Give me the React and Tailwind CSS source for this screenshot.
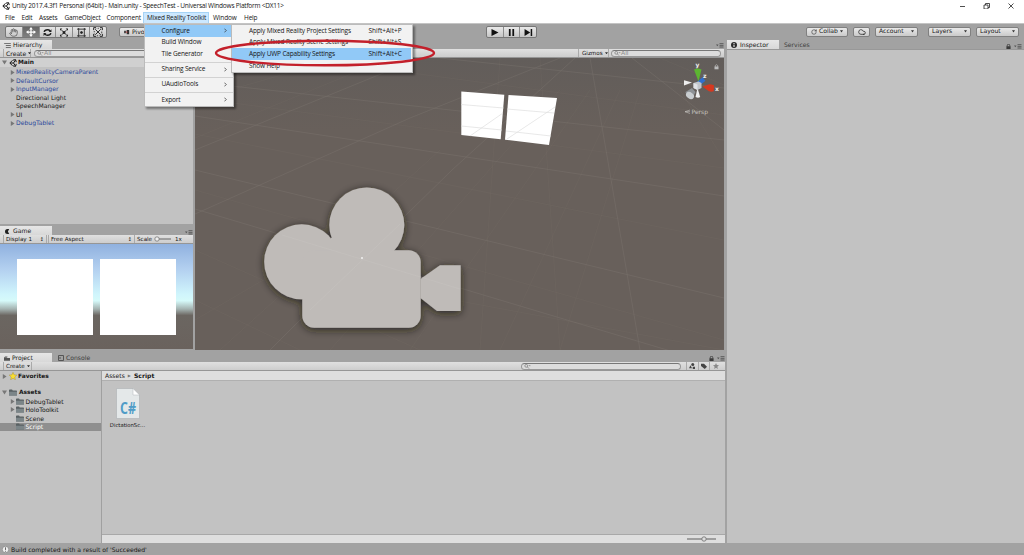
import React from 'react'
import { RotateCw, Cloud, Hand } from 'lucide-react'
import clsx from 'clsx'

const MENUS = [
  { label: 'File', width: 'w-[16.500px]' },
  { label: 'Edit', width: 'w-[17.500px]' },
  { label: 'Assets', width: 'w-[25.500px]' },
  { label: 'GameObject', width: 'w-[42px]' },
  { label: 'Component', width: 'w-[40.500px]' },
  { label: 'Mixed Reality Toolkit', width: 'w-[64px] mr-[2px]', open: true },
  { label: 'Window', width: 'w-[31px]' },
  { label: 'Help', width: 'w-[20px]' },
]

const TOOLKIT_MENU = [
  { label: 'Configure', sub: true, active: true },
  { label: 'Build Window' },
  { label: 'Tile Generator' },
  { label: 'Sharing Service', sub: true, line: true },
  { label: 'UAudioTools', sub: true, line: true },
  { label: 'Export', sub: true, line: true },
]

const CONFIGURE_MENU = [
  { label: 'Apply Mixed Reality Project Settings', keys: 'Shift+Alt+P' },
  { label: 'Apply Mixed Reality Scene Settings', keys: 'Shift+Alt+S' },
  { label: 'Apply UWP Capability Settings', keys: 'Shift+Alt+C', active: true },
  { label: 'Show Help' },
]

const OBJECTS = [
  { label: 'MixedRealityCameraParent', prefab: true, arrow: true },
  { label: 'DefaultCursor', prefab: true, arrow: true },
  { label: 'InputManager', prefab: true, arrow: true },
  { label: 'Directional Light' },
  { label: 'SpeechManager' },
  { label: 'UI', arrow: true },
  { label: 'DebugTablet', prefab: true, arrow: true },
]

const FOLDERS = [
  { label: 'DebugTablet', arrow: true },
  { label: 'HoloToolkit', arrow: true },
  { label: 'Scene' },
  { label: 'Script', selected: true },
]

const BAR = 'flex items-center shrink-0 h-[9px] bg-linear-to-b from-[#e0e0e0] to-[#cdcdcd] border-b border-[#969696]'

function UnityLogo({ className }) {
  return (
    <svg viewBox="0 0 16 16" className={clsx('shrink-0', className)} fill="none" stroke="#1c1c1c" strokeWidth="2">
      <path d="M7 2.5 1.8 8 7 13.5M1.8 8H9M9 8l4-6M9 8l4 6M8 2.2l5.2-1 1.3 5M8 13.8l5.2 1 1.3-5" />
    </svg>
  )
}

function Arrow({ open, hidden }) {
  return (
    <svg viewBox="0 0 6 6" className={clsx('w-[5px] h-[5px] shrink-0', hidden && 'invisible')} fill="#777">
      <path d={open ? 'M0 .5h6L3 5.5z' : 'M1 0v6l4.500-3z'} />
    </svg>
  )
}

function Lock({ className }) {
  return (
    <svg viewBox="0 0 6 6" className={clsx('w-[5px] h-[5px] shrink-0', className)}>
      <path d="M1.500 3V1.800a1.500 1.500 0 0 1 3 0V3" fill="none" stroke="currentColor" />
      <rect x=".5" y="2.700" width="5" height="3.300" fill="currentColor" />
    </svg>
  )
}

function PanelMenu() {
  return (
    <svg viewBox="0 0 8 5" className="w-[8px] h-[5px] shrink-0" fill="#555">
      <path d="M0 1.500h2.600L1.300 3.300zM3.500.3h4v.9h-4zM3.500 1.900h4v.9h-4zM3.500 3.500h4v.9h-4z" />
    </svg>
  )
}

function Folder() {
  return (
    <svg viewBox="0 0 16 13" className="w-[8px] h-[7px] shrink-0">
      <path d="M0 2Q0 .5 1.500.5H6l1.500 2h7Q16 2.500 16 4v7.500q0 1-1 1H1q-1 0-1-1z" fill="#596163" />
      <path d="M0 5h16v6.500q0 1-1 1H1q-1 0-1-1z" fill="#7b8588" />
    </svg>
  )
}

function Search({ text, className }) {
  return (
    <div className={clsx('flex items-center h-[7px] rounded-full border border-[#989898] border-t-[#777] bg-[#dcdcdc] pl-[2px] text-[#8b8b8b]', className)}>
      <svg viewBox="0 0 8 6" className="w-[7px] h-[5px] shrink-0" fill="none" stroke="#858585">
        <circle cx="2.500" cy="2.200" r="1.700" />
        <path d="m3.800 3.500 2 2M5.500 2h2" />
      </svg>
      {text}
    </div>
  )
}

function Tab({ children, idle, className }) {
  return (
    <div className={clsx('flex items-center gap-[2px] h-[9px] pt-[1px]', idle ? 'text-[#3d3d3d]' : 'bg-linear-to-b from-[#e6e6e6] to-[#d8d8d8]', className)}>
      {children}
    </div>
  )
}

function Button({ children, className }) {
  return (
    <div className={clsx('flex items-center justify-center h-[10px] rounded-[2px] border border-[#808080] bg-linear-to-b from-[#e9e9e9] to-[#cacaca]', className)}>
      {children}
    </div>
  )
}

function Caret() {
  return <svg viewBox="0 0 4 3" className="w-[3px] h-[2.500px] shrink-0"><path d="M0 0h4L2 3z" fill="#333" /></svg>
}

function Label({ children }) {
  return <span className="pt-[1.500px]">{children}</span>
}

function TransformTools() {
  return (
    <div className="flex h-[12px] w-[102px] ml-[5px] rounded-[2px] border border-[#777] bg-linear-to-b from-[#e6e6e6] to-[#c6c6c6] divide-x divide-[#8c8c8c] *:flex *:flex-1 *:items-center *:justify-center">
      <div><Hand className="w-[9px] h-[9px] text-[#555]" /></div>
      <div className="bg-linear-to-b from-[#666] to-[#808080]">
        <svg viewBox="0 0 16 16" className="w-[10px] h-[10px]" fill="#fff">
          <path d="M7 4H5l3-4 3 4H9v3h3V5l4 3-4 3V9H9v3h2l-3 4-3-4h2V9H4v2L0 8l4-3v2h3z" />
        </svg>
      </div>
      <div>
        <svg viewBox="0 0 16 16" className="w-[9px] h-[9px]" fill="none" stroke="#1e1e1e" strokeWidth="2.500">
          <path d="M2 7q1-4 6-4 3 0 4.500 2M14 9q-1 4-6 4-3 0-4.500-2" />
          <path d="M15 2v5h-5zM1 14V9h5z" fill="#1e1e1e" stroke="none" />
        </svg>
      </div>
      <div>
        <svg viewBox="0 0 16 16" className="w-[10px] h-[9px]" fill="#1e1e1e" stroke="#1e1e1e" strokeWidth="1.500">
          <rect x="6.500" y="6.500" width="3" height="3" />
          <path d="m3 3 10 10M13 3 3 13" />
          <path d="M1 1h4L1 5zM15 1v4l-4-4zM1 15v-4l4 4zM15 15h-4l4-4z" stroke="none" />
        </svg>
      </div>
      <div>
        <svg viewBox="0 0 16 16" className="w-[9px] h-[9px]" fill="none" stroke="#222" strokeWidth="1.500">
          <path d="M3 0v16M13 0v16M0 2h16M0 14h16" />
          <circle cx="8" cy="8" r="1.800" fill="#222" />
        </svg>
      </div>
      <div>
        <svg viewBox="0 0 16 16" className="w-[10px] h-[10px]" fill="none" stroke="#222" strokeWidth="1.500">
          <path d="m4 4 8 8M12 4l-8 8M1 5V1h4M11 1h4v4M15 11v4h-4M5 15H1v-4" />
          <circle cx="8" cy="8" r="6" strokeDasharray="2 2.500" />
        </svg>
      </div>
    </div>
  )
}

function Toolbar() {
  return (
    <div className="flex shrink-0 h-[17px] pt-[2px] border-t border-[#c4c4c4] bg-[#a2a2a2]">
      <div className="w-[486px] flex">
        <TransformTools />
        <Button className="mt-px ml-[12px] w-[40px] !justify-start pl-[4px]">
          <svg viewBox="0 0 8 6" className="w-[7px] h-[5px] mr-[1px]"><path d="M0 1h2v3H0zM3 0h3v5H3z" fill="#333" /><path d="M2 2h2v1H2z" fill="#c33" /></svg>
          Pivot
        </Button>
      </div>
      <div className="flex w-[51px] h-[12px] rounded-[2px] border border-[#777] bg-linear-to-b from-[#e9e9e9] to-[#c6c6c6] divide-x divide-[#8c8c8c] *:flex *:flex-1 *:items-center *:justify-center">
        <div><svg viewBox="0 0 8 8" className="w-[8px] h-[7px]"><path d="M0 0 8 4 0 8z" fill="#111" /></svg></div>
        <div><svg viewBox="0 0 8 8" className="w-[7px] h-[7px]"><path d="M1 0h2v8H1zM5 0h2v8H5z" fill="#111" /></svg></div>
        <div><svg viewBox="0 0 9 8" className="w-[9px] h-[7px]"><path d="M0 0 6.500 4 0 8zM7 0h1.700v8H7z" fill="#111" /></svg></div>
      </div>
      <div className="flex ml-auto pr-[5px] pt-[.5px]">
        <Button className="w-[42px] gap-[2px]">
          <RotateCw className="w-[6px] h-[6px]" />Collab<Caret />
        </Button>
        <Button className="w-[17px] ml-[5px]"><Cloud className="w-[8px] h-[8px]" /></Button>
        <Button className="w-[43px] ml-[5px] !justify-between px-[3px]">Account<Caret /></Button>
        <Button className="w-[43px] ml-[10px] !justify-between px-[3px]">Layers<Caret /></Button>
        <Button className="w-[43px] ml-[5px] !justify-between px-[3px]">Layout<Caret /></Button>
      </div>
    </div>
  )
}

function Hierarchy() {
  return (
    <div className="flex flex-col h-[184px] shrink-0">
      <Tab className="w-[52px] pl-[4px]">
        <svg viewBox="0 0 8 6" className="w-[7px] h-[5px]" stroke="#555"><path d="M0 .5h8M2 3h6M2 5.500h6" /></svg>
        Hierarchy
      </Tab>
      <div className={BAR}>
        <div className="flex items-center gap-[2px] w-[28px] h-full ml-[3px] pl-[2px] border-x border-[#aaa]"><Label>Create</Label><Caret /></div>
        <Search text="All" className="ml-[3px] w-[148px]" />
      </div>
      <div className="flex-1 bg-[#c2c2c2]">
        <div className="flex items-center h-[9px] pl-[2px] mb-px bg-[#d0d0d0] font-bold text-[5.900px]">
          <Arrow open />
          <UnityLogo className="w-[8px] h-[8px] ml-[2px] mr-[1px]" />
          <Label>Main</Label>
        </div>
        {OBJECTS.map(o => (
          <div key={o.label} className={clsx('flex items-center h-[8.500px] pl-[10px]', o.prefab && 'text-[#29479b]')}>
            <Arrow hidden={!o.arrow} />
            <span className="pl-[1px]">{o.label}</span>
          </div>
        ))}
      </div>
    </div>
  )
}

function Game() {
  return (
    <div className="flex flex-col flex-1 pt-[2px]">
      <div className="flex justify-between items-end">
        <Tab className="w-[52px] pl-[5px]">
          <svg viewBox="0 0 6 6" className="w-[5px] h-[5px]"><path d="M3 0a3 3 0 0 0 0 6h2L3.500 3 5 0z" fill="#222" /></svg>
          <span className="pl-[1px]">Game</span>
        </Tab>
        <PanelMenu />
      </div>
      <div className={clsx(BAR, 'text-[5.600px]')}>
        <div className="flex justify-between items-center w-[44px] h-full ml-[3px] px-[2px] border-x border-[#aaa]"><Label>Display 1</Label><span className="text-[5px]">↕</span></div>
        <div className="flex justify-between items-center w-[87px] h-full ml-[1px] px-[2px] border-x border-[#aaa]"><Label>Free Aspect</Label><span className="text-[5px]">↕</span></div>
        <span className="ml-[2px] pt-[1.500px]">Scale</span>
        <svg viewBox="0 0 18 6" className="w-[18px] h-[6px] ml-[2px]"><path d="M2 3h15" stroke="#666" /><circle cx="3" cy="3" r="2.200" fill="#eee" stroke="#777" strokeWidth=".8" /></svg>
        <span className="ml-[3px] pt-[1.500px]">1x</span>
      </div>
      <div className="flex gap-[7px] pl-[17px] pt-[15px] flex-1 mb-[1px] bg-[linear-gradient(#90b1df_0,#b3d0f0_24%,#d0f5fc_48%,#d6fafa_54%,#a4b2b0_62%,#6b6661_68%,#6a625d_100%)]">
        <div className="w-[76px] h-[76px] bg-white" />
        <div className="w-[76px] h-[76px] bg-white" />
      </div>
    </div>
  )
}

function Gizmo() {
  return (
    <g>
      <path d="m698 84 6-5" stroke="#2f6fd0" strokeWidth="4.500" />
      <path d="m694 69.500 3.500-1h1l3 1-3 12z" fill="#5cb531" />
      <path d="m702.500 86.500 7-2.200q2 .2 4.500 1l-.3 6q-2.700 1-5.200-.3z" fill="#d6381f" />
      <path d="m684 80.300 8 2.200-8 3z" fill="#eee" />
      <path d="m697.500 88 2.700 9q-2 1.500-4.700 0z" fill="#efefef" />
      <path d="m692 88-6.500 4 1.500 5 5 2 3.500-7z" fill="#8e9296" />
      <ellipse cx="690" cy="95.500" rx="4.300" ry="3.200" transform="rotate(35 690 95.500)" fill="#c9cdd0" />
      <path d="m693.500 83 5-1.500 3 1.500v5l-4 2-4-2z" fill="#c2c6cc" />
      <path d="m693.500 83 4 1.500v5.500l-4-2z" fill="#e0e2e6" />
      <g fill="#eee" fontSize="6" fontWeight="bold">
        <text x="695.500" y="67">y</text>
        <text x="703" y="78">z</text>
        <text x="715" y="91">x</text>
      </g>
      <path d="m690 110-5 1.700 5 1.800M685 111.700h5" stroke="#c5c2bf" strokeWidth=".6" fill="none" />
      <text x="691.500" y="114" fontSize="6" fill="#c5c2bf">Persp</text>
    </g>
  )
}

function Scene() {
  return (
    <div className="flex flex-col w-[529px] shrink-0">
      <div className="h-[9px] flex justify-end items-end pb-[1px]"><PanelMenu /></div>
      <div className={clsx(BAR, 'justify-end')}>
        <div className="flex items-center gap-[2px] w-[31px] h-full pl-[3px] border-x border-[#aaa] text-[5.600px]"><Label>Gizmos</Label><Caret /></div>
        <Search text="All" className="ml-[2px] mr-[3px] w-[110px]" />
      </div>
      <svg viewBox="195 58 529 292" className="w-[529px] h-[292px] block">
        <defs>
          <linearGradient id="ground" x1="0" y1="0" x2="0" y2="1">
            <stop offset="0" stopColor="#625d5a" />
            <stop offset=".25" stopColor="#68605b" />
            <stop offset="1" stopColor="#68605b" />
          </linearGradient>
          <filter id="glow" x="-20%" y="-20%" width="140%" height="140%">
            <feDropShadow dx="0" dy="2" stdDeviation="4" floodColor="#1e1a17" floodOpacity=".75" />
          </filter>
        </defs>
        <rect x="195" y="58" width="529" height="292" fill="url(#ground)" />
        <g stroke="#8b847e" strokeWidth=".6" opacity=".4" fill="none">
          <path d="M195 214 410 118 560 58M270 350 360 260 452 170 575 58M195 209 460 288 724 367M195 170 724 298" />
          <path d="M590 58 606 150 640 350M632 58 724 130M195 116 724 196M195 82 724 140M440 58 724 88M195 150 420 58" />
        </g>
        <g stroke="#8b847e" strokeWidth=".5" opacity=".2" fill="none">
          <path d="M195 250 420 350M195 300 300 350M195 320 340 235M220 350 440 150M330 350 560 90M410 350 590 90M500 350 620 90M560 350 640 90M195 190 724 340M195 134 724 240M195 98 724 168M300 58 724 115M660 58 724 85M540 58 560 350M500 58 480 350M390 58 195 138M340 58 195 100M400 290 724 350M680 90 724 160" />
        </g>
        <g fill="#fff">
          <path d="m461.300 91.500 43 3.300-3.600 44.500-39.400-4.300z" />
          <path d="m508.500 95 48.500 3-8 47-44-5.300z" />
        </g>
        <path d="m461 104.500 42.500 3.500M461 126l41 4M507 109l47 4M506 131l45 5M470 136l33-23M507 139l48-32" stroke="#dedede" strokeWidth=".7" />
        <g filter="url(#glow)" fill="#bfbbb8">
          <circle cx="366.800" cy="225" r="37.500" />
          <circle cx="301.700" cy="261.800" r="37.500" />
          <rect x="302.300" y="250.200" width="118.400" height="77.600" rx="12" />
          <path d="M331 238h60v40h-60z" />
          <path d="m420.500 279 19.500-13.700h20.700V311H437l-16.500-13z" />
        </g>
        <path d="m282 235 178 54M310 310l90-86" stroke="#cac6c3" strokeWidth=".6" opacity=".6" />
        <circle cx="362" cy="258" r="1" fill="#f2f2f2" />
        <Gizmo />
        <g fill="#bbb">
          <rect x="714.500" y="66.500" width="4" height="2.800" />
          <path d="M715.300 67v-1.500q1.200-1.600 2.400 0V67" fill="none" stroke="#bbb" strokeWidth=".7" />
        </g>
      </svg>
    </div>
  )
}

function Project() {
  return (
    <div className="flex flex-col h-[193px] shrink-0 pt-[3px]">
      <div className="flex items-end h-[9px]">
        <Tab className="w-[52px] pl-[4px]">
          <svg viewBox="0 0 7 5" className="w-[6px] h-[5px]"><path d="M0 1h3l1 1h3v3H0z" fill="#555" /><path d="M1 0h3v1H1z" fill="#777" /></svg>
          Project
        </Tab>
        <Tab idle className="pl-[6px]">
          <svg viewBox="0 0 6 6" className="w-[6px] h-[6px]" fill="none" stroke="#555"><path d="M.5.5h5v5h-5zM2 2v2" /></svg>
          Console
        </Tab>
        <div className="flex items-center gap-[3px] ml-auto pb-[1px]"><Lock className="text-[#3b3b3b]" /><PanelMenu /></div>
      </div>
      <div className={BAR}>
        <div className="flex items-center gap-[2px] w-[29px] h-full ml-[3px] pl-[2px] border-x border-[#aaa] text-[5.600px]"><Label>Create</Label><Caret /></div>
        <Search className="ml-auto w-[160px]" />
        <div className="flex h-full ml-[5px] mr-[3px] w-[36px] border-l border-[#aaa] divide-x divide-[#aaa] *:flex *:w-[12px] *:items-center *:justify-center">
          <div><svg viewBox="0 0 8 8" className="w-[6px] h-[6px]" fill="#444"><circle cx="5" cy="2" r="2" /><path d="M0 7 2 3l2 4zM5 5h3v3H5z" /></svg></div>
          <div><svg viewBox="0 0 8 8" className="w-[6px] h-[6px]" fill="#444"><path d="M0 1h4l4 4-3 3-5-4z" /></svg></div>
          <div><svg viewBox="0 0 8 8" className="w-[6px] h-[6px]" fill="#888"><path d="m4 0 1.200 2.800L8 3 5.800 5l.7 3L4 6.400 1.500 8l.7-3L0 3l2.800-.2z" /></svg></div>
        </div>
      </div>
      <div className="flex flex-1 bg-[#c2c2c2]">
        <div className="w-[102px] shrink-0 border-r border-[#a0a0a0]">
          <div className="flex items-center h-[10px] pl-[2px] font-bold text-[5.900px]">
            <Arrow />
            <svg viewBox="0 0 8 8" className="w-[8px] h-[8px] mx-[1.500px]"><path d="m4 .3 1.100 2.500 2.700.3-2 1.900.6 2.700L4 6.300 1.600 7.700 2.200 5 .2 3.100l2.700-.3z" fill="#f8dd33" stroke="#a48a20" strokeWidth=".4" /></svg>
            <Label>Favorites</Label>
          </div>
          <div className="flex items-center h-[9px] mt-[7px] pl-[2px] gap-[2px] font-bold text-[5.900px]"><Arrow open /><Folder /><Label>Assets</Label></div>
          {FOLDERS.map(f => (
            <div key={f.label} className={clsx('flex items-center h-[8.500px] pl-[9.500px] gap-[1.500px]', f.selected && 'bg-[#8f8f8f] text-white')}>
              <Arrow hidden={!f.arrow} />
              <Folder />
              <Label>{f.label}</Label>
            </div>
          ))}
        </div>
        <div className="flex flex-col flex-1">
          <div className="flex items-center h-[10px] pl-[3px] bg-[#dedede] border-b border-[#b0b0b0]">
            <Label>Assets</Label><span className="px-[3px] text-[4px] text-[#777]">▶</span><b className="pt-[1.500px]">Script</b>
          </div>
          <div className="flex-1 pt-[7px] pl-[7px]">
            <div className="w-[37px] flex flex-col items-center">
              <svg viewBox="0 0 24 31" className="w-[24px] h-[31px]">
                <path d="M.5.500H17L23.500 7v23.500H.5z" fill="#e4e8e9" stroke="#b2b6b8" strokeWidth=".7" />
                <path d="M17 .500V7h6.500z" fill="#fff" stroke="#b2b6b8" strokeWidth=".5" />
                <text x="5" y="26" transform="scale(.8 1)" fontSize="15.500" fontWeight="bold" fill="#4f9cc7" className="font-['Open_Sans',sans-serif]">C#</text>
              </svg>
              <span className="text-[5.300px] mt-[3px] leading-[7px] whitespace-nowrap">DictationSc...</span>
            </div>
          </div>
          <div className="flex items-center justify-end h-[9px] pr-[9px] bg-[#dedede] border-t border-[#a8a8a8]">
            <svg viewBox="0 0 29 6" className="w-[29px] h-[6px]"><path d="M0 3h29" stroke="#888" strokeWidth="1.500" /><circle cx="17" cy="3" r="2.200" fill="#ddd" stroke="#777" strokeWidth=".9" /></svg>
          </div>
        </div>
      </div>
    </div>
  )
}

function Inspector() {
  return (
    <div className="flex flex-col flex-1 ml-[2px]">
      <div className="flex h-[9px]">
        <Tab className="w-[52px] pl-[4px]">
          <svg viewBox="0 0 6 6" className="w-[6px] h-[6px]"><circle cx="3" cy="3" r="3" fill="#2b2b2b" /><path d="M3 1v1M3 2.600V5" stroke="#fff" /></svg>
          <span className="pl-px">Inspector</span>
        </Tab>
        <Tab idle className="pl-[5px]">Services</Tab>
        <div className="flex items-center gap-[3px] ml-auto pt-[3px] pr-[2px]"><Lock className="text-[#3b3b3b]" /><PanelMenu /></div>
      </div>
      <div className="flex-1 bg-[#c2c2c2] border-t border-[#989898]" />
    </div>
  )
}

function DropMenus() {
  return (
    <>
      <div className="absolute left-[144px] top-[24px] w-[90px] h-[83px] bg-[#f2f2f2] border border-[#bbb] shadow-[2px_2px_2px_#0006]">
        {TOOLKIT_MENU.map(m => (
          <div key={m.label} className={clsx(m.line && 'border-t border-[#d2d2d2] mt-[2px] pt-[.5px]')}>
            <div className={clsx('flex items-center justify-between h-[11.700px] pl-[16.500px] pr-[4px] mr-[2px]', m.active && 'bg-[#91c9f7]')}>
              {m.label}
              {m.sub && <svg viewBox="0 0 4 6" className="w-[3px] h-[5px]"><path d="m.5.5 2.500 2.500L.5 5.500" fill="none" stroke="#333" /></svg>}
            </div>
          </div>
        ))}
      </div>
      <div className="absolute left-[231px] top-[24px] w-[182px] h-[49px] bg-[#f2f2f2] border border-[#bbb] shadow-[2px_2px_2px_#0006]">
        {CONFIGURE_MENU.map(m => (
          <div key={m.label} className={clsx('flex items-center h-[11.700px] pl-[17px] mr-px', m.active && 'bg-[#91c9f7]')}>
            <span className="w-[119.500px]">{m.label}</span>
            <span className="tracking-normal">{m.keys}</span>
          </div>
        ))}
      </div>
      <svg viewBox="210 36 230 34" className="absolute left-[210px] top-[36px] w-[230px] h-[34px]">
        <ellipse cx="325" cy="53" rx="109" ry="12.300" fill="none" stroke="#c3202b" strokeWidth="2.400" />
      </svg>
    </>
  )
}

export default function App() {
  return (
    <div className="relative flex flex-col w-[1024px] h-[555px] overflow-hidden bg-[#a2a2a2] text-[6.100px] leading-none text-[#161616] whitespace-nowrap font-['DejaVu_Sans',sans-serif]">
      <div className="shrink-0 bg-white font-['Open_Sans',sans-serif] text-[6.500px]">
        <div className="flex items-center h-[12px] pl-[2px]">
          <UnityLogo className="w-[8px] h-[8px]" />
          <span className="pl-[2px] pt-px tracking-[-.21px]">Unity 2017.4.3f1 Personal (64bit) - Main.unity - SpeechTest - Universal Windows Platform &lt;DX11&gt;</span>
          <svg viewBox="0 0 54 6" className="w-[54px] h-[6px] ml-auto mr-[10px]" fill="none" stroke="#222" strokeWidth=".8">
            <path d="M0 3.500h5M24 2h4v4h-4zM25.500 2V.5h4v4H28M48.500.5l5 5M53.500.5l-5 5" />
          </svg>
        </div>
        <div className="flex items-center h-[11px] pl-[1.500px] tracking-[-.16px]">
          {MENUS.map(m => (
            <div key={m.label} className={clsx('flex items-center shrink-0 h-[10px] pl-[3.500px] pt-px', m.width, m.open && 'bg-[#cce8ff] outline outline-[#a6d3f5]')}>{m.label}</div>
          ))}
        </div>
      </div>
      <Toolbar />
      <div className="flex flex-1">
        <div className="flex flex-col w-[725px] shrink-0">
          <div className="flex h-[310px] shrink-0">
            <div className="flex flex-col w-[193px] shrink-0 mr-[2px]">
              <Hierarchy />
              <Game />
            </div>
            <Scene />
          </div>
          <Project />
        </div>
        <Inspector />
      </div>
      <div className="flex items-center h-[12px] shrink-0 pl-[2px] gap-[2px]">
        <svg viewBox="0 0 8 8" className="w-[7px] h-[7px]"><circle cx="4" cy="4" r="3.700" fill="#eee" stroke="#666" strokeWidth=".6" /><path d="M4 1.500v3M4 5.500v1" stroke="#555" /></svg>
        <Label>Build completed with a result of 'Succeeded'</Label>
      </div>
      <div className="font-['Open_Sans',sans-serif] text-[6.500px] tracking-[-.16px]"><DropMenus /></div>
    </div>
  )
}
